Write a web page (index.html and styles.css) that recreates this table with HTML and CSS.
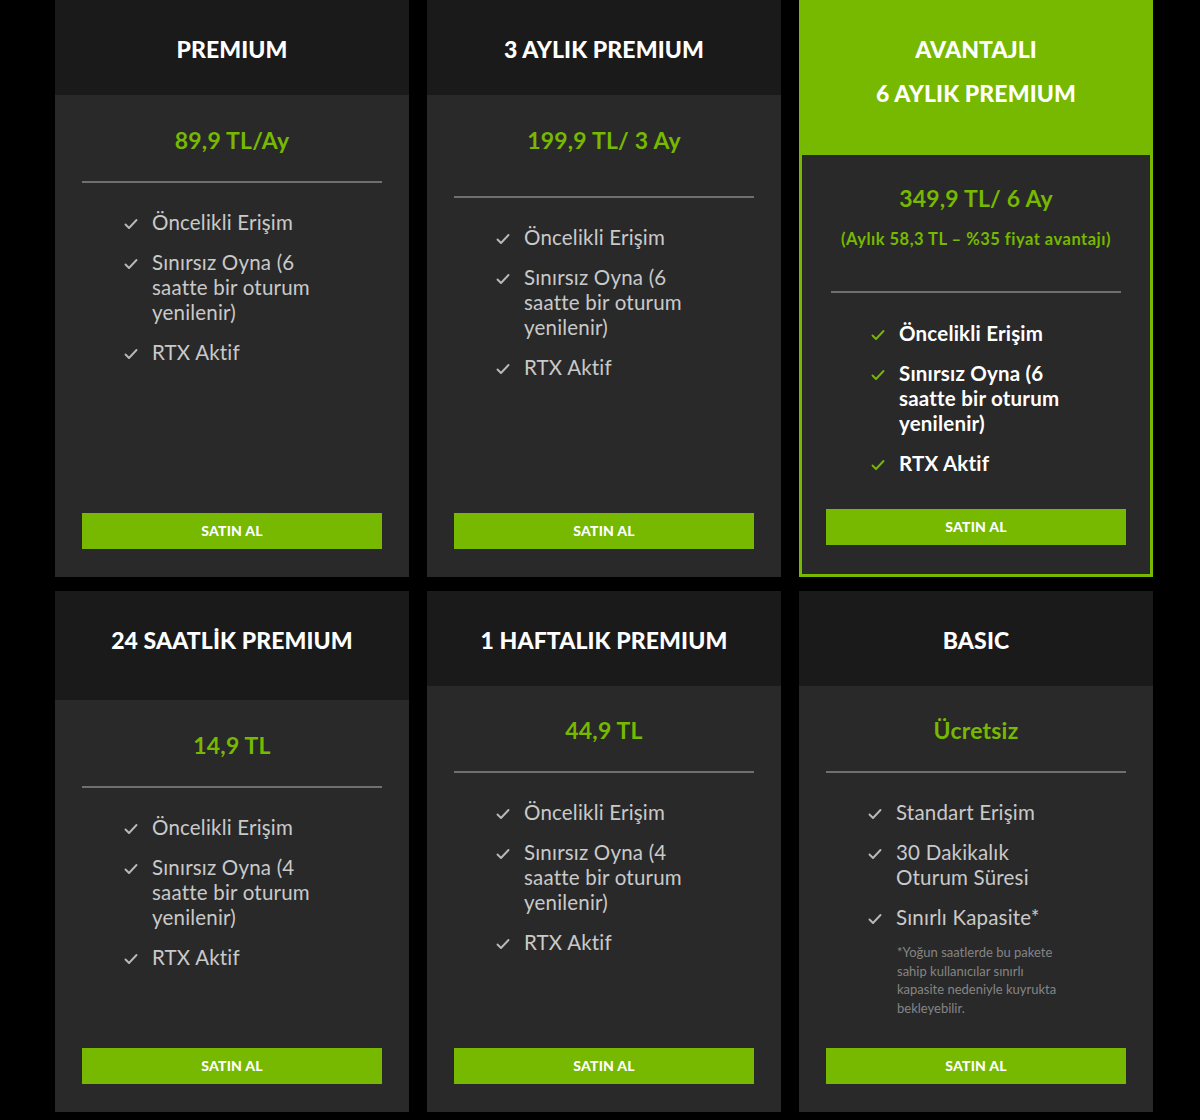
FILE: index.html
```html
<!DOCTYPE html>
<html lang="tr">
<head>
<meta charset="utf-8">
<title>Paketler</title>
<link rel="stylesheet" href="styles.css">
</head>
<body>
<svg width="0" height="0" class="defs" aria-hidden="true">
  <symbol id="chk" viewBox="0 0 14 12"><polyline points="1.5,6.5 5,10 12.5,2" fill="none" stroke="currentColor" stroke-width="1.9" stroke-linecap="round" stroke-linejoin="round"/></symbol>
</svg>
<main class="plans">
  <section class="card">
    <header class="card-head"><h2>PREMIUM</h2></header>
    <div class="card-body">
      <p class="price">89,9 TL/Ay</p>
      <hr class="divider">
      <ul class="features">
        <li><svg class="chk"><use href="#chk"/></svg><span>Öncelikli Erişim</span></li>
        <li><svg class="chk"><use href="#chk"/></svg><span>Sınırsız Oyna (6 saatte bir oturum yenilenir)</span></li>
        <li><svg class="chk"><use href="#chk"/></svg><span>RTX Aktif</span></li>
      </ul>
      <a class="buy" href="#">SATIN AL</a>
    </div>
  </section>

  <section class="card">
    <header class="card-head"><h2>3 AYLIK PREMIUM</h2></header>
    <div class="card-body">
      <p class="price price-tall">199,9 TL/ 3 Ay</p>
      <hr class="divider">
      <ul class="features">
        <li><svg class="chk"><use href="#chk"/></svg><span>Öncelikli Erişim</span></li>
        <li><svg class="chk"><use href="#chk"/></svg><span>Sınırsız Oyna (6 saatte bir oturum yenilenir)</span></li>
        <li><svg class="chk"><use href="#chk"/></svg><span>RTX Aktif</span></li>
      </ul>
      <a class="buy" href="#">SATIN AL</a>
    </div>
  </section>

  <section class="card card-featured">
    <header class="card-head"><h2>AVANTAJLI<br>6 AYLIK PREMIUM</h2></header>
    <div class="card-body">
      <p class="price">349,9 TL/ 6 Ay</p>
      <p class="price-sub">(Aylık 58,3 TL – %35 fiyat avantajı)</p>
      <hr class="divider">
      <ul class="features">
        <li><svg class="chk"><use href="#chk"/></svg><span>Öncelikli Erişim</span></li>
        <li><svg class="chk"><use href="#chk"/></svg><span>Sınırsız Oyna (6 saatte bir oturum yenilenir)</span></li>
        <li><svg class="chk"><use href="#chk"/></svg><span>RTX Aktif</span></li>
      </ul>
      <a class="buy" href="#">SATIN AL</a>
    </div>
  </section>

  <section class="card">
    <header class="card-head card-head-tall"><h2>24 SAATLİK PREMIUM</h2></header>
    <div class="card-body">
      <p class="price">14,9 TL</p>
      <hr class="divider">
      <ul class="features">
        <li><svg class="chk"><use href="#chk"/></svg><span>Öncelikli Erişim</span></li>
        <li><svg class="chk"><use href="#chk"/></svg><span>Sınırsız Oyna (4 saatte bir oturum yenilenir)</span></li>
        <li><svg class="chk"><use href="#chk"/></svg><span>RTX Aktif</span></li>
      </ul>
      <a class="buy" href="#">SATIN AL</a>
    </div>
  </section>

  <section class="card">
    <header class="card-head"><h2>1 HAFTALIK PREMIUM</h2></header>
    <div class="card-body">
      <p class="price price-low">44,9 TL</p>
      <hr class="divider">
      <ul class="features">
        <li><svg class="chk"><use href="#chk"/></svg><span>Öncelikli Erişim</span></li>
        <li><svg class="chk"><use href="#chk"/></svg><span>Sınırsız Oyna (4 saatte bir oturum yenilenir)</span></li>
        <li><svg class="chk"><use href="#chk"/></svg><span>RTX Aktif</span></li>
      </ul>
      <a class="buy" href="#">SATIN AL</a>
    </div>
  </section>

  <section class="card">
    <header class="card-head"><h2>BASIC</h2></header>
    <div class="card-body">
      <p class="price price-low">Ücretsiz</p>
      <hr class="divider">
      <ul class="features">
        <li><svg class="chk"><use href="#chk"/></svg><span>Standart Erişim</span></li>
        <li><svg class="chk"><use href="#chk"/></svg><span>30 Dakikalık Oturum Süresi</span></li>
        <li><svg class="chk"><use href="#chk"/></svg><span>Sınırlı Kapasite*</span></li>
      </ul>
      <p class="note">*Yoğun saatlerde bu pakete sahip kullanıcılar sınırlı kapasite nedeniyle kuyrukta bekleyebilir.</p>
      <a class="buy" href="#">SATIN AL</a>
    </div>
  </section>
</main>
</body>
</html>
```

FILE: styles.css
```css
* { box-sizing: border-box; }

html, body {
  margin: 0;
  padding: 0;
  background: #000;
}

body {
  font-family: "Lato", "Noto Sans", sans-serif;
  color: #c8c8c8;
  width: 1200px;
  height: 1120px;
  overflow: hidden;
}

.defs { position: absolute; width: 0; height: 0; }

.plans {
  display: grid;
  grid-template-columns: 354px 354px 354px;
  grid-template-rows: 577px 521px;
  column-gap: 18px;
  row-gap: 14px;
  padding-left: 55px;
}

.card {
  display: flex;
  flex-direction: column;
  background: #292929;
}

.card-head {
  background: #1a1a1a;
  height: 95px;
  padding-top: 34px;
  text-align: center;
}

.card-head-tall { height: 109px; }

.card-head h2 {
  margin: 0;
  color: #fff;
  font-size: 23px;
  line-height: 30px;
  font-weight: 900;
  letter-spacing: 0.1px;
}

.card-body {
  flex: 1;
  display: flex;
  flex-direction: column;
  padding: 30px 27px 28px;
}

.price {
  margin: 0;
  text-align: center;
  color: #76b900;
  font-size: 23px;
  line-height: 30px;
  font-weight: 700;
  letter-spacing: 0.2px;
}

.price-low { margin-top: -1px; }

.price-sub {
  margin: 16px 0 0;
  text-align: center;
  color: #76b900;
  font-size: 16.5px;
  line-height: 20px;
  font-weight: 700;
  letter-spacing: 0.5px;
}

.divider {
  margin: 26px 0 0;
  border: 0;
  height: 2px;
  background: #6f6f6f;
}

.price-tall + .divider { margin-top: 41px; }

.features {
  list-style: none;
  margin: 27px 0 0;
  padding: 0 30px 0 42px;
  display: flex;
  flex-direction: column;
  gap: 15px;
}

.features li {
  display: flex;
  align-items: flex-start;
  gap: 14px;
  font-size: 20.5px;
  line-height: 25px;
  letter-spacing: 0.2px;
  color: #c9c9c9;
}

.features span { max-width: 186px; }

.chk {
  flex: none;
  width: 14px;
  height: 12px;
  margin-top: 8px;
  color: #b9b9b9;
}

.note {
  margin: 13px 0 0 71px;
  max-width: 173px;
  font-size: 13px;
  line-height: 18.7px;
  color: #858585;
}

.buy {
  margin-top: auto;
  display: block;
  height: 36px;
  line-height: 36px;
  background: #76b900;
  color: #fff;
  text-align: center;
  text-decoration: none;
  font-size: 14px;
  font-weight: 900;
  letter-spacing: 0.2px;
}

/* featured */
.card-featured {
  border: 3px solid #76b900;
}

.card-featured .card-head {
  background: #76b900;
  height: 152px;
  padding-top: 24px;
}

.card-featured .card-head h2 { line-height: 44px; }

.card-featured .card-body { padding: 28px 24px 29px; }

.card-featured .divider {
  margin: 42px 5px 0;
}

.card-featured .features {
  margin-top: 28px;
  padding-left: 45px;
}

.card-featured .features li {
  color: #fff;
  font-weight: 700;
}

.card-featured .chk { color: #76b900; }
```
